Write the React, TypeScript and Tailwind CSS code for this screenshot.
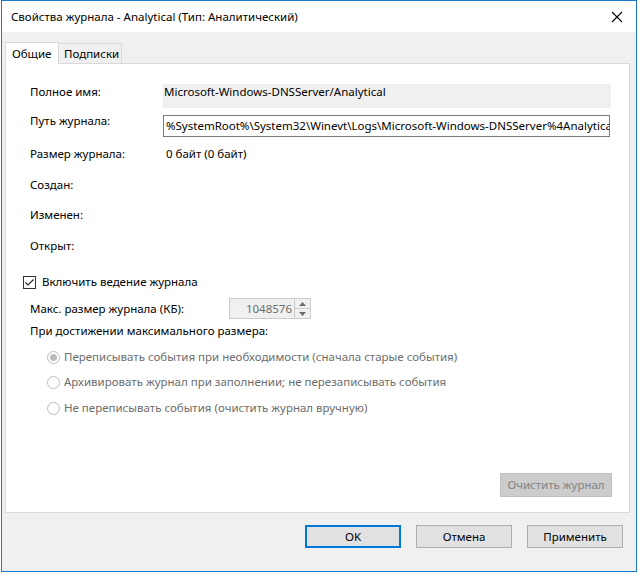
import React from "react";

const F = { fontFamily: '"Segoe UI", "Noto Sans", "Liberation Sans", sans-serif' };

function Radio({ checked, label }: { checked?: boolean; label: string }) {
  return (
    <div className="flex items-center h-4 pl-[17px]">
      <span className="w-[13px] h-[13px] rounded-full border border-[#bcbcbc] bg-white flex items-center justify-center">
        {checked && <span className="w-[7px] h-[7px] rounded-full bg-[#bcbcbc]" />}
      </span>
      <span className="ml-[4px] text-[#6d6d6d]">{label}</span>
    </div>
  );
}

function Btn({ label, primary }: { label: string; primary?: boolean }) {
  return (
    <div
      className={
        "w-[96px] h-[23px] flex items-center justify-center bg-[#e1e1e1] " +
        (primary ? "border-2 border-[#0078d7]" : "border border-[#adadad]")
      }
    >
      {label}
    </div>
  );
}

export default function App() {
  return (
    <div className="w-[638px] h-[573px] bg-white overflow-hidden" style={F}>
      <div className="ml-[1px] w-[636px] h-[572px] border border-[#1979ca] bg-[#f0f0f0] flex flex-col text-[11.5px] leading-4 text-black">
        {/* Title bar */}
        <div className="h-[31px] bg-white flex items-center justify-between pl-[9px] pr-[9px] shrink-0">
          <span>Свойства журнала - Analytical (Тип: Аналитический)</span>
          <svg width="12" height="12" viewBox="0 0 12 12" className="mr-[4px]">
            <path d="M1 1 L11 11 M11 1 L1 11" stroke="#000" strokeWidth="1.1" />
          </svg>
        </div>

        {/* Tabs */}
        <div className="flex items-end h-[31px] pl-[3px] shrink-0">
          <div className="h-[22px] px-[6px] bg-white border border-b-0 border-[#d9d9d9] flex items-center relative z-10 -mb-[1px] w-[54px]">
            Общие
          </div>
          <div className="h-[20px] bg-[#f0f0f0] border border-l-0 border-b-0 border-[#d9d9d9] flex items-center px-[5px] w-[63px]">
            Подписки
          </div>
        </div>

        {/* Panel */}
        <div className="ml-[3px] w-[625px] h-[450px] bg-white border border-[#d9d9d9] flex flex-col pl-[24px] pt-[20px] shrink-0">
          <div className="flex h-[24px] items-start">
            <div className="w-[133px]">Полное имя:</div>
            <div className="w-[448px] h-[24px] bg-[#f0f0f0] pl-[1px]">Microsoft-Windows-DNSServer/Analytical</div>
          </div>
          <div className="flex h-[22px] items-start mt-[7px]">
            <div className="w-[133px] -mt-[2px]">Путь журнала:</div>
            <div className="w-[447px] h-[22px] border border-[#7a7a7a] flex items-center pl-[2px] overflow-hidden whitespace-nowrap">
              %SystemRoot%\System32\Winevt\Logs\Microsoft-Windows-DNSServer%4Analytical
            </div>
          </div>
          <div className="flex mt-[9px] h-4">
            <div className="w-[136px]">Размер журнала:</div>
            <div>0 байт (0 байт)</div>
          </div>
          <div className="mt-[15px] h-4">Создан:</div>
          <div className="mt-[14px] h-4">Изменен:</div>
          <div className="mt-[15px] h-4">Открыт:</div>

          <div className="flex items-center h-4 mt-[20px] -ml-[7px]">
            <span className="w-[13px] h-[13px] border border-[#333] bg-white flex items-center justify-center">
              <svg width="11" height="11" viewBox="0 0 11 11">
                <path d="M1.5 5.5 L4 8 L9.5 2.5" stroke="#222" strokeWidth="1.1" fill="none" />
              </svg>
            </span>
            <span className="ml-[6px]">Включить ведение журнала</span>
          </div>

          <div className="flex items-center h-[21px] mt-[8px]">
            <div className="w-[199px]">Макс. размер журнала (КБ):</div>
            <div className="w-[82px] h-[21px] border border-[#cccccc] bg-[#f0f0f0] flex">
              <div className="flex-1 text-right pr-[2px] text-[#6d6d6d] leading-[19px]">1048576</div>
              <div className="w-[16px] flex flex-col border-l border-[#cccccc]">
                <div className="flex-1 flex items-center justify-center border-b border-[#cccccc]">
                  <svg width="7" height="4" viewBox="0 0 7 4"><path d="M0 4 L3.5 0 L7 4 Z" fill="#6d6d6d" /></svg>
                </div>
                <div className="flex-1 flex items-center justify-center">
                  <svg width="7" height="4" viewBox="0 0 7 4"><path d="M0 0 L3.5 4 L7 0 Z" fill="#6d6d6d" /></svg>
                </div>
              </div>
            </div>
          </div>

          <div className="mt-[4px] h-4">При достижении максимального размера:</div>

          <div className="mt-[10px] flex flex-col gap-[9px]">
            <Radio checked label="Переписывать события при необходимости (сначала старые события)" />
            <Radio label="Архивировать журнал при заполнении; не перезаписывать события" />
            <div className="mt-[1px]">
              <Radio label="Не переписывать события (очистить журнал вручную)" />
            </div>
          </div>

          <div className="flex-1" />
          <div className="flex justify-end pr-[17px] mb-[15px]">
            <div className="w-[112px] h-[24px] bg-[#cccccc] border border-[#bfbfbf] text-[#838383] flex items-center justify-center">
              Очистить журнал
            </div>
          </div>
        </div>

        {/* Bottom buttons */}
        <div className="flex justify-end gap-[15px] pr-[13px] mt-[12px]">
          <Btn primary label="OK" />
          <Btn label="Отмена" />
          <Btn label="Применить" />
        </div>
      </div>
    </div>
  );
}
